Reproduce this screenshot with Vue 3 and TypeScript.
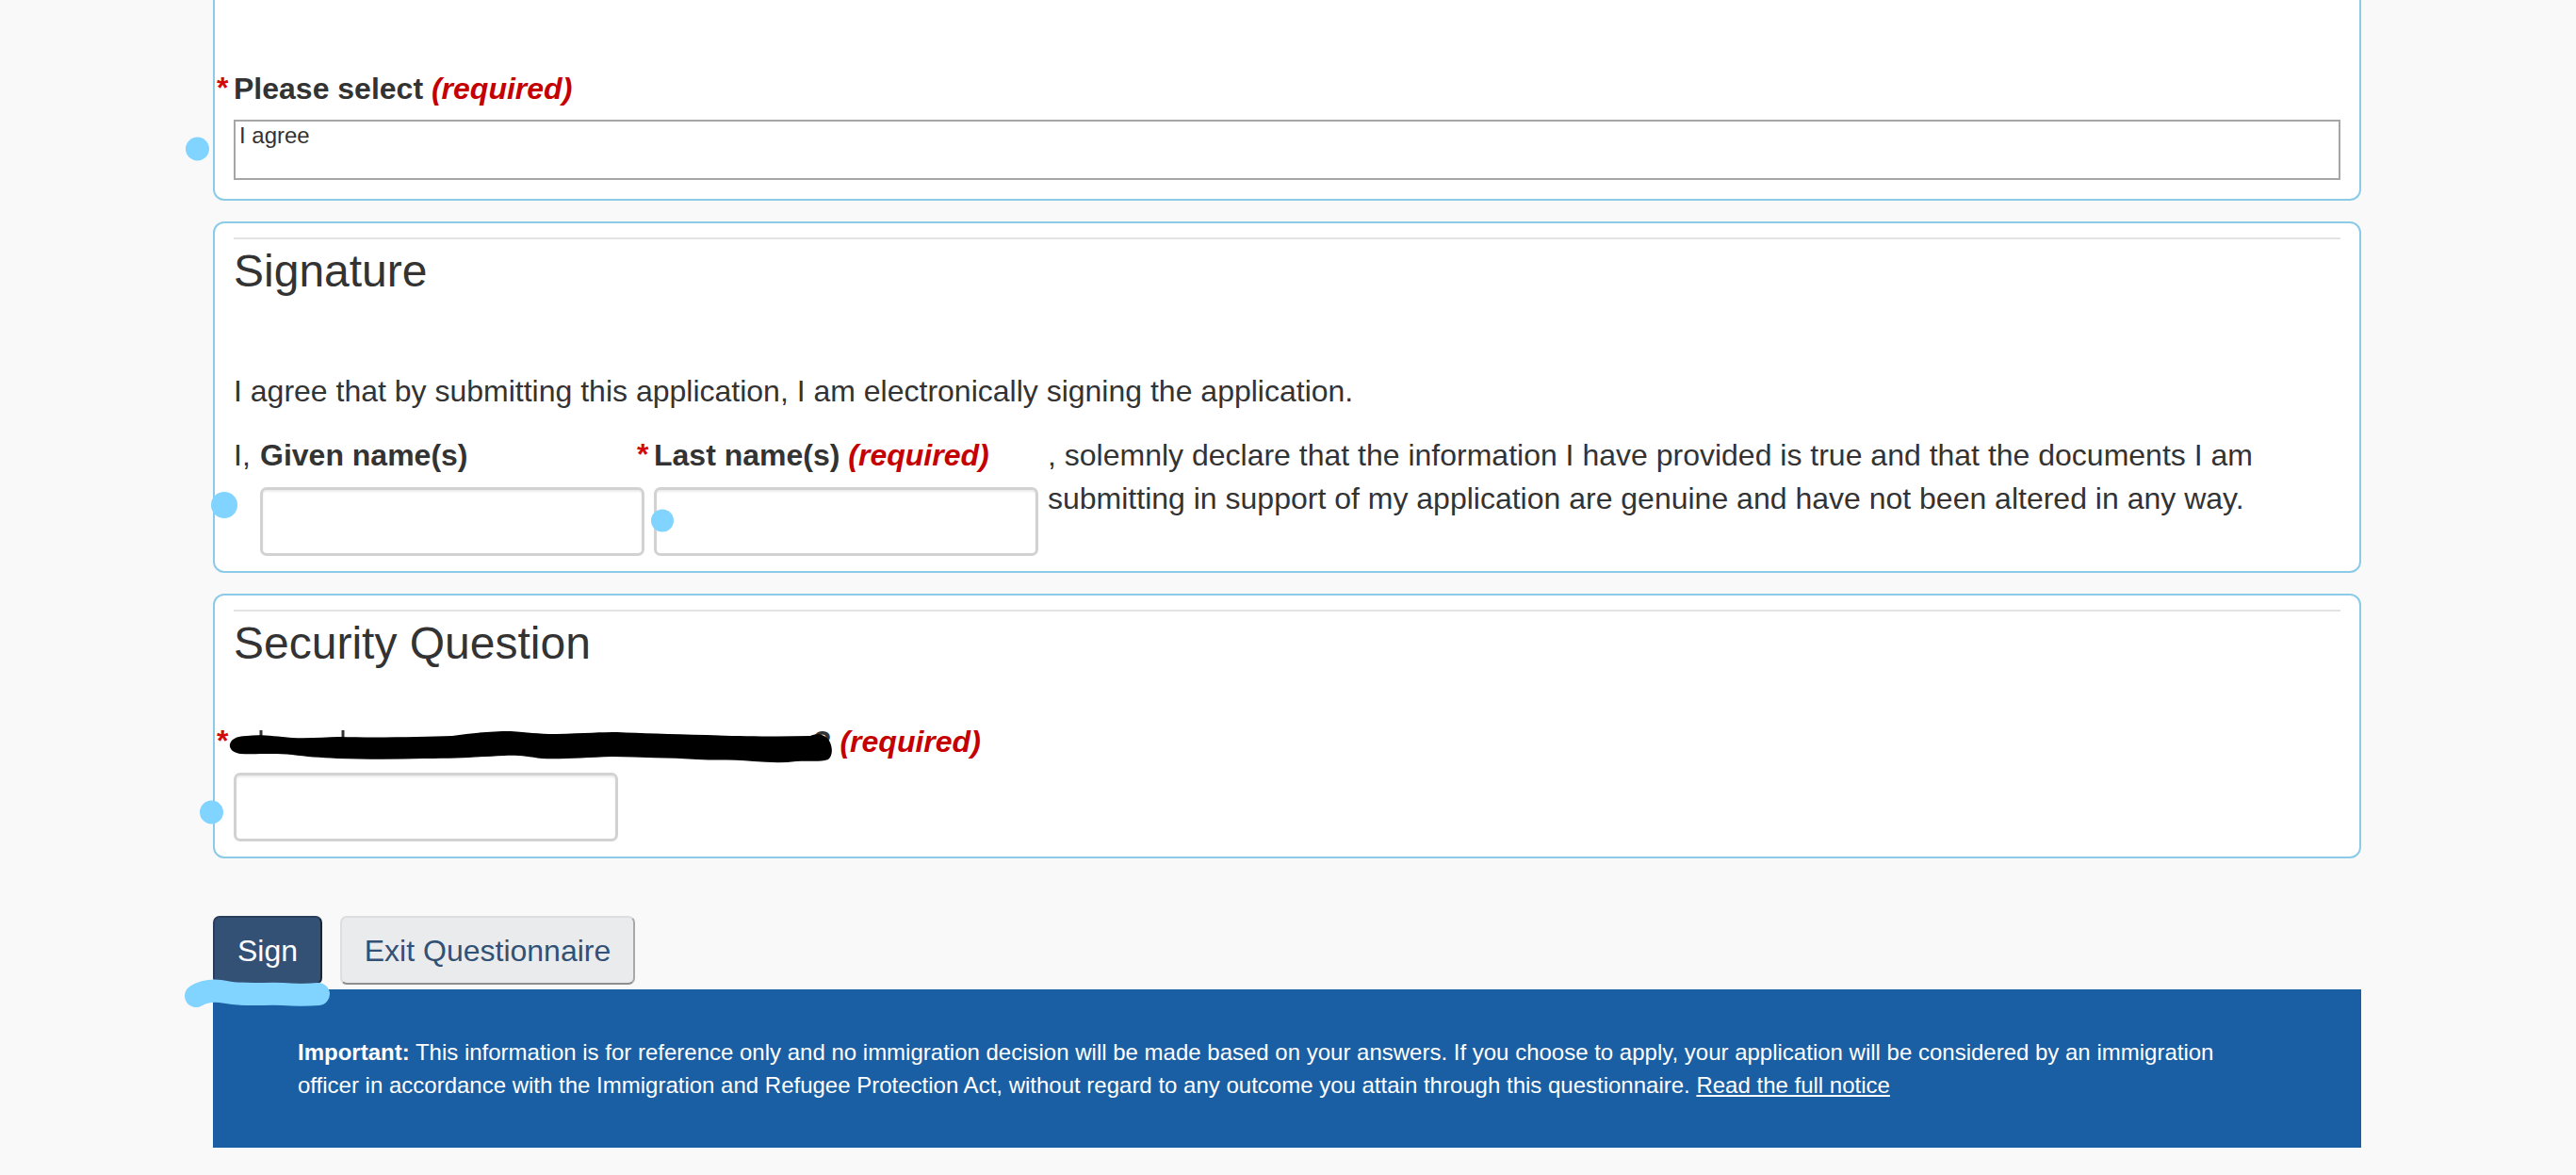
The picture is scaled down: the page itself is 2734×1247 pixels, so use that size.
<script setup lang="ts">
interface Mark {
  cx: number
  cy: number
  r: number
}

// pen marks drawn on top of the page
const dots: Mark[] = [
  { cx: 209.5, cy: 158, r: 12.5 },
  { cx: 238, cy: 536, r: 14 },
  { cx: 703, cy: 552.5, r: 12 },
  { cx: 224.5, cy: 862, r: 12.5 }
]
</script>

<template>
  <div class="page">
    <main class="content">
      <section class="panel panel-first">
        <label class="field-label">
          <span class="star">*</span>Please select <em class="required">(required)</em>
        </label>
        <select class="list-select" size="2">
          <option>I agree</option>
        </select>
      </section>

      <section class="panel">
        <hr class="rule" />
        <h2 class="heading">Signature</h2>
        <p class="statement">I agree that by submitting this application, I am electronically signing the application.</p>
        <div class="declare-row">
          <span class="prefix">I,</span>
          <div class="name-field">
            <label class="field-label">Given name(s)</label>
            <input class="text-input" type="text" />
          </div>
          <div class="name-field">
            <label class="field-label">
              <span class="star">*</span>Last name(s) <em class="required">(required)</em>
            </label>
            <input class="text-input" type="text" />
          </div>
          <p class="declare-text">, solemnly declare that the information I have provided is true and that the documents I am submitting in support of my application are genuine and have not been altered in any way.</p>
        </div>
      </section>

      <section class="panel">
        <hr class="rule" />
        <h2 class="heading">Security Question</h2>
        <label class="field-label question-label">
          <span class="star">*</span><span class="redacted"></span>? <em class="required">(required)</em>
        </label>
        <input class="text-input" type="text" />
      </section>

      <div class="actions">
        <button class="btn btn-primary" type="button">Sign</button>
        <button class="btn btn-default" type="button">Exit Questionnaire</button>
      </div>

      <footer class="notice">
        <p>
          <strong>Important:</strong> This information is for reference only and no immigration decision will be made based on your answers. If you choose to apply, your application will be considered by an immigration officer in accordance with the Immigration and Refugee Protection Act, without regard to any outcome you attain through this questionnaire.
          <a class="notice-link" href="#">Read the full notice</a>
        </p>
      </footer>
    </main>

    <svg class="marks" width="2734" height="1247" viewBox="0 0 2734 1247" fill="none">
      <line x1="277" y1="775" x2="277" y2="785" class="tick" />
      <line x1="364" y1="775" x2="364" y2="785" class="tick" />
      <path class="scribble" d="M244 790C245 784 252 781 262 781C275 779 290 781 310 783C330 784 345 782 360 782C400 783 450 782 480 781C500 778 520 776 542 776C560 777 570 779 590 779C620 778 640 777 655 777C680 778 710 779 750 780C780 781 820 782 860 781C868 777 876 780 880 786C884 793 884 802 879 806C870 809 860 807 845 808C830 810 815 809 800 808C780 806 760 807 740 806C710 804 680 804 650 803C620 804 595 806 575 805C560 803 550 801 535 802C510 803 490 805 450 805C420 806 390 806 358 805C340 804 325 803 310 801C290 799 270 801 255 800C248 799 243 795 244 790Z" />
      <path class="underline" d="M208 1057C216 1052 226 1050 240 1053C262 1057 280 1054 300 1055C315 1056 325 1056 338 1055" />
      <circle v-for="(dot, i) in dots" :key="i" class="dot" :cx="dot.cx" :cy="dot.cy" :r="dot.r" />
    </svg>
  </div>
</template>

<style>
html,
body {
  margin: 0;
  background: #f9f9f9;
}
</style>

<style scoped>
.page {
  position: relative;
  height: 1247px;
  overflow: hidden;
  background: #f9f9f9;
  color: #333;
  font-family: "Liberation Sans", Arial, sans-serif;
  font-size: 32px;
  line-height: 46px;
}

.content {
  width: 2280px;
  margin-left: 226px;
}

.panel {
  margin-bottom: 22px;
  padding: 15px 20px 16px;
  background: #fff;
  border: 2px solid #8ccbe8;
  border-radius: 12px;
}

.panel-first {
  padding-top: 71px;
  padding-bottom: 20px;
  border-top: none;
  border-radius: 0 0 12px 12px;
}

.field-label {
  position: relative;
  display: block;
  margin-bottom: 11px;
  font-weight: 700;
}

.panel-first .field-label {
  margin-bottom: 10px;
}

.star {
  position: absolute;
  left: -18px;
  top: -1px;
  color: #d3080c;
  font-size: 32px;
  font-weight: 700;
}

.required {
  color: #c40000;
  font-style: italic;
  font-weight: 700;
}

.list-select {
  display: block;
  box-sizing: border-box;
  width: 100%;
  height: 64px;
  padding: 1px 2px;
  overflow: hidden;
  background: #fff;
  border: 2px solid #a6a6a6;
  border-radius: 0;
  outline: none;
  color: #333;
  font-family: inherit;
  font-size: 24px;
}

.rule {
  height: 2px;
  margin: 0 0 8px;
  background: #e3e3e3;
  border: none;
}

.heading {
  margin: 0;
  font-size: 48px;
  font-weight: 400;
  line-height: 52px;
}

.statement {
  margin: 78px 0 22px;
}

.declare-row {
  display: flex;
  align-items: flex-start;
}

.prefix {
  width: 28px;
  flex-shrink: 0;
}

.name-field {
  width: 408px;
  margin-right: 10px;
  flex-shrink: 0;
}

.declare-text {
  width: 1290px;
  margin: 0;
}

.text-input {
  display: block;
  box-sizing: border-box;
  width: 408px;
  height: 73px;
  padding: 8px 16px;
  background: #fff;
  border: 3px solid #d2d2d2;
  border-radius: 7px;
  box-shadow: inset 0 2px 2px rgba(0, 0, 0, 0.075);
  outline: none;
}

.question-label {
  margin-top: 55px;
  margin-bottom: 10px;
}

.redacted {
  display: inline-block;
  width: 615px;
}

.actions {
  display: flex;
  gap: 19px;
  margin-top: 61px;
  margin-bottom: 5px;
}

.btn {
  box-sizing: border-box;
  height: 73px;
  padding: 2px 0 0;
  border-radius: 7px;
  font-family: inherit;
  font-size: 32px;
  cursor: pointer;
}

.btn-primary {
  width: 116px;
  background: #335075;
  border: 2px solid #293e5a;
  border-right-color: #1a2636;
  color: #fff;
}

.btn-default {
  width: 313px;
  background: #eaebed;
  border: 2px solid #dcdee1;
  border-right-color: #a8a8a8;
  border-bottom-color: #8e8e8e;
  color: #335075;
}

.notice {
  box-sizing: border-box;
  height: 168px;
  padding: 49px 130px 0 90px;
  background: #1a5fa3;
  color: #fff;
  font-size: 24px;
  line-height: 35px;
}

.notice p {
  margin: 0;
}

.notice-link {
  color: #fff;
  text-decoration: underline;
}

.marks {
  position: absolute;
  left: 0;
  top: 0;
  pointer-events: none;
}

.tick {
  stroke: #333;
  stroke-width: 3;
}

.scribble {
  fill: #000;
}

.underline {
  stroke: #80d4ff;
  stroke-width: 24;
  stroke-linecap: round;
  stroke-linejoin: round;
}

.dot {
  fill: #80d4ff;
}
</style>
